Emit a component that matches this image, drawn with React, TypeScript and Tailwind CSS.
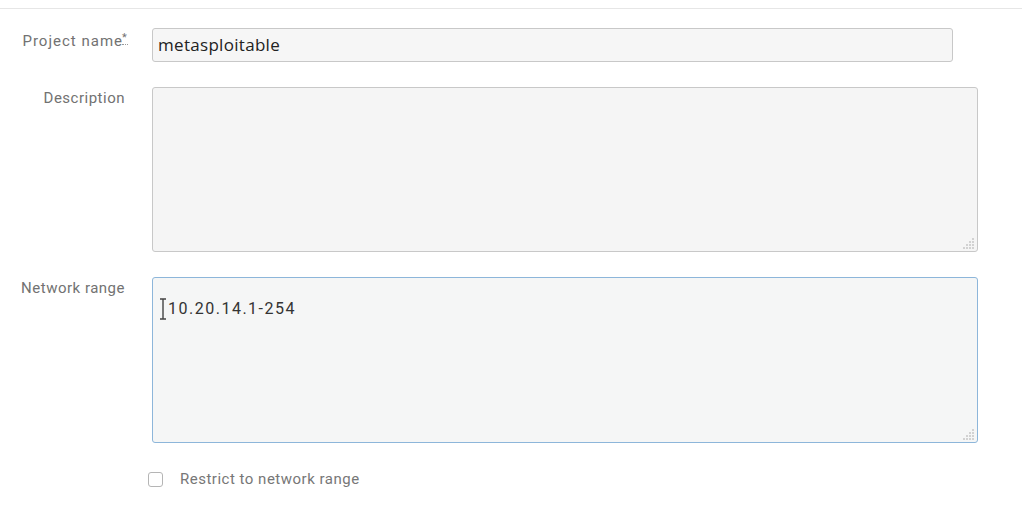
import React from "react";

function Grip() {
  // dotted resize grip in the bottom-right corner
  const dots = [
    [9, 1], [9, 4], [6, 4], [9, 7], [6, 7], [3, 7], [9, 10], [6, 10], [3, 10], [0, 10],
  ];
  return (
    <svg className="absolute right-[2px] bottom-[2px]" width="12" height="12" viewBox="0 0 12 12">
      {dots.map(([x, y], i) => (
        <rect key={i} x={x} y={y} width="2" height="2" fill="#d2d2d2" />
      ))}
    </svg>
  );
}

export default function App() {
  const label =
    "w-[125px] shrink-0 text-right text-[15px] tracking-[0.5px] text-[#727272] font-['Roboto',sans-serif]";

  return (
    <div className="w-[1022px] h-[506px] bg-white overflow-hidden">
      <div className="h-[9px] border-b border-[#e6e6e6]" />

      <div className="flex flex-col pt-[19px]">
        {/* Project name */}
        <div className="flex items-start">
          <div className={`${label} pt-[2px] tracking-[1px] pr-[2px]`}>
            Project name
            <span className="inline-block w-0 relative">
              <span className="absolute -left-[1px] -top-[14px] text-[11px] border-b border-dotted border-[#999] leading-[12px]">*</span>
            </span>
          </div>
          <div className="ml-[27px] w-[801px] h-[34px] border border-[#c8c8c8] rounded-[3px] bg-[#f6f6f6] flex items-center px-[5px]">
            <span className="text-[17px] tracking-[0.3px] text-[#222] font-['Open_Sans',sans-serif]">metasploitable</span>
          </div>
        </div>

        {/* Description */}
        <div className="flex items-start mt-[25px]">
          <div className={label}>Description</div>
          <div className="ml-[27px] w-[826px] h-[165px] border border-[#c8c8c8] rounded-[3px] bg-[#f5f5f5] relative">
            <Grip />
          </div>
        </div>

        {/* Network range */}
        <div className="flex items-start mt-[25px]">
          <div className={label}>Network range</div>
          <div className="ml-[27px] w-[826px] h-[166px] border-[1.5px] border-[#8db6da] rounded-[3px] bg-[#f5f6f6] relative">
            <div className="flex items-center pt-[19px] pl-[6px]">
              <svg width="8" height="22" viewBox="0 0 8 22" className="mr-[1px]">
                <path d="M1 1h6M4 1v20M1 21h6" stroke="#444" strokeWidth="1.4" fill="none" />
              </svg>
              <span className="text-[16px] text-[#333] tracking-[1.5px] font-['Roboto',sans-serif]">10.20.14.1-254</span>
            </div>
            <Grip />
          </div>
        </div>

        {/* Checkbox */}
        <div className="flex items-center mt-[25px] ml-[148px]">
          <div className="w-[15px] h-[15px] border border-[#b5b5b5] rounded-[3px] bg-white" />
          <span className="ml-[17px] text-[15px] tracking-[0.5px] text-[#777] font-['Roboto',sans-serif]">
            Restrict to network range
          </span>
        </div>
      </div>
    </div>
  );
}
